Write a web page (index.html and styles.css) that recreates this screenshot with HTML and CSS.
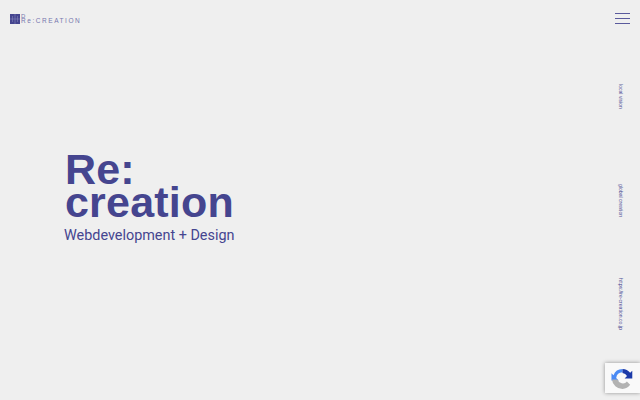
FILE: index.html
```html
<!DOCTYPE html>
<html lang="en">
<head>
<meta charset="utf-8">
<title>Re:creation</title>
<link rel="stylesheet" href="styles.css">
</head>
<body>
<div class="page">
  <header class="top">
    <a class="logo">
      <svg class="mark" width="10" height="10" viewBox="0 0 10 10"><rect width="10" height="10" fill="#45458f"/><path d="M0 5h10M5 0v10M2.5 2v6M7.5 2v6" stroke="#8f8fc0" stroke-width=".5"/></svg>
      <span class="wordmark"><span class="mini">D</span><span class="word">Re:CREATION</span></span>
    </a>
    <div class="burger"><i></i><i></i><i></i></div>
  </header>
  <div class="body">
    <main class="hero">
      <h1>Re:<br>creation</h1>
      <p>Webdevelopment + Design</p>
    </main>
    <nav class="rail">
      <span>local vision</span>
      <span>global creation</span>
      <span>https://re-creation.co.jp</span>
    </nav>
  </div>
  <div class="badge">
    <svg width="23" height="23" viewBox="0 0 24 24">
      <path d="M12 2a10 10 0 0 0-9.4 6.6L0.5 6.5V14h7.5l-2.6-2.6A6.8 6.8 0 0 1 12 5.5z" fill="#4a8af4"/>
      <path d="M12 2a10 10 0 0 1 8 4l2.2-2.2V12h-8l2.5-2.5A5.8 5.8 0 0 0 12 6.2z" fill="#1c3aa9"/>
      <path d="M0.8 13H7a5.5 5.5 0 0 0 9.6 2.2l2.6 2.6 .8.8A10.5 10.5 0 0 1 12 23 11 11 0 0 1 1 13z" fill="#b2b2b2"/>
    </svg>
  </div>
</div>
</body>
</html>
```
FILE: styles.css
```css
* { box-sizing: border-box; }
html, body { margin: 0; height: 100%; }
body { background: #efefef; font-family: "Liberation Sans", Arial, sans-serif; color: #45458f; overflow: hidden; }
.page { position: relative; width: 640px; height: 400px; display: flex; flex-direction: column; }
.top { display: flex; justify-content: space-between; align-items: flex-start; padding: 13px 10px 0 10px; height: 84px; }
.logo { display: flex; align-items: center; gap: 1px; margin-top: 1px; }
.mark { display: block; }
.wordmark { display: flex; flex-direction: column; line-height: 5px; color: #7676ae; font-weight: 400; margin-top: -1px; }
.mini { font-size: 6px; height: 4px; }
.word { font-size: 6.5px; letter-spacing: 1.55px; white-space: nowrap; }
.burger { width: 15px; display: flex; flex-direction: column; gap: 4px; }
.burger i { display: block; height: 1px; background: #5a5a9c; }
.body { flex: 1; display: flex; justify-content: space-between; }
.hero { padding: 69px 0 0 65px; }
h1 { margin: 0; font-size: 43px; line-height: 33px; font-weight: 700; letter-spacing: 0.2px; color: #45458f; }
.hero p { margin: 8px 0 0 -1px; font-family: "Roboto", sans-serif; font-size: 14.4px; line-height: 18px; color: #45458f; }
.rail { width: 38px; display: flex; flex-direction: column; align-items: center; }
.rail span { writing-mode: vertical-rl; font-size: 5.1px; line-height: 6px; color: #4f4f96; white-space: nowrap; }
.rail span:nth-child(1) { height: 100px; }
.rail span:nth-child(2) { height: 94px; }
.badge { position: absolute; right: 0; bottom: 7px; width: 35px; height: 30px; background: #f9f9f9; box-shadow: 0 0 4px rgba(0,0,0,.4); padding: 4px 0 0 6px; }
.badge svg { display: block; }
```
